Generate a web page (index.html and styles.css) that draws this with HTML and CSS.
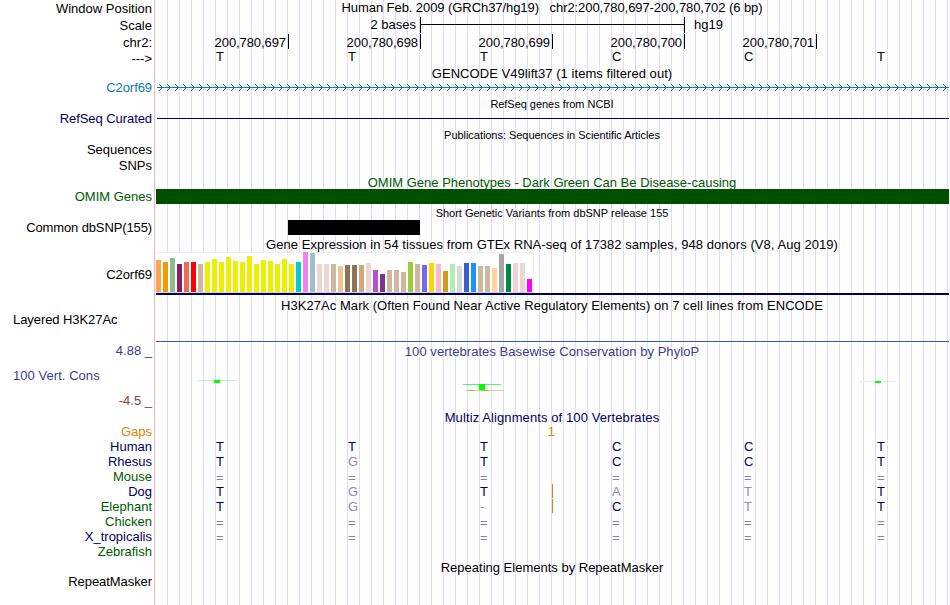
FILE: index.html
```
<!DOCTYPE html>
<html lang="en">
<head>
<meta charset="utf-8">
<title>chr2:200,780,697-200,780,702 Genome Browser</title>
<link rel="stylesheet" href="styles.css">
</head>
<body>
<main class="browser">
  <div class="row position"><div class="label low">Window Position</div><div class="track title t-pos">Human Feb. 2009 (GRCh37/hg19) &nbsp; chr2:200,780,697-200,780,702 (6 bp)</div></div>
  <div class="row scale"><div class="label low">Scale</div><div class="track scalebar"><span class="size">2 bases</span><span class="bar"></span><span class="db">hg19</span></div></div>
  <div class="row ruler"><div class="label">chr2:</div><div class="track ticks"><span>200,780,697</span><span>200,780,698</span><span>200,780,699</span><span>200,780,700</span><span>200,780,701</span></div></div>
  <div class="row"><div class="label arrow">---&gt;</div><div class="track bases black"><span>T</span><span>T</span><span>T</span><span>C</span><span>C</span><span>T</span></div></div>

  <div class="row gap2"><div class="track title t-wide">GENCODE V49lift37 (1 items filtered out)</div></div>
  <div class="row up1"><div class="label blue t-tight">C2orf69</div><div class="track">
    <svg class="gene" width="793" height="15" shape-rendering="crispEdges">
      <defs><pattern id="chev" x="3" y="0" width="8" height="15" patternUnits="userSpaceOnUse"><path d="M0 4h1v1h-1zM1 5h1v1h-1zM2 6h1v1h-1zM3 7h1v1h-1zM2 8h1v1h-1zM1 9h1v1h-1zM0 10h1v1h-1z" fill="#0c78b4"/></pattern></defs>
      <rect x="1" y="7" width="792" height="1" fill="#0c78b4"/><rect x="3" width="790" height="15" fill="url(#chev)"/>
    </svg></div></div>

  <div class="row gap1"><div class="track title small">RefSeq genes from NCBI</div></div>
  <div class="row"><div class="label navy t-tight">RefSeq Curated</div><div class="track"><div class="curated"></div></div></div>

  <div class="row gap1"><div class="track title small">Publications: Sequences in Scientific Articles</div></div>
  <div class="row"><div class="label">Sequences</div></div>
  <div class="row gap1"><div class="label">SNPs</div></div>

  <div class="row gap2"><div class="track title green">OMIM Gene Phenotypes - Dark Green Can Be Disease-causing</div></div>
  <div class="row up1"><div class="label green">OMIM Genes</div><div class="track omim"></div></div>

  <div class="row gap1"><div class="track title small t-short">Short Genetic Variants from dbSNP release 155</div></div>
  <div class="row"><div class="label t-common">Common dbSNP(155)</div><div class="track"><div class="snp"></div></div></div>

  <div class="row gap2"><div class="track title t-wide">Gene Expression in 54 tissues from GTEx RNA-seq of 17382 samples, 948 donors (V8, Aug 2019)</div></div>
  <div class="row expression"><div class="label t-tight">C2orf69</div><div class="track"><div class="gtex" id="gtex"></div></div></div>

  <div class="row gap3"><div class="track title t-wide">H3K27Ac Mark (Often Found Near Active Regulatory Elements) on 7 cell lines from ENCODE</div></div>
  <div class="row layered"><div class="label left t-tight">Layered H3K27Ac</div><div class="track"></div></div>

  <div class="row phylo">
    <div class="label phylolabels"><span class="slate">4.88 _</span><span class="slate left t-wide">100 Vert. Cons</span><span class="brick">-4.5 _</span></div>
    <div class="track phylotrack"><div class="title slate t-wide">100 vertebrates Basewise Conservation by PhyloP</div>
      <svg class="wiggle" width="793" height="34" shape-rendering="crispEdges">
        <rect x="42" y="21" width="38" height="1" fill="#b4ffb4"/><rect x="58" y="21" width="6" height="3" fill="#0f0"/>
        <rect x="307" y="25" width="38" height="1" fill="#50ff50"/><rect x="323" y="25" width="6" height="6" fill="#0f0"/>
        <rect x="310" y="31" width="38" height="1" fill="#d8d490"/><rect x="312" y="31" width="6" height="1" fill="#b4b43c"/><rect x="325" y="31" width="8" height="1" fill="#b4b43c"/>
        <rect x="703" y="22" width="38" height="1" fill="#d0ffd0"/><rect x="719" y="22" width="6" height="2" fill="#0f0"/>
      </svg></div>
  </div>

  <div class="row"><div class="track title navy t-multiz">Multiz Alignments of 100 Vertebrates</div></div>
  <div class="row up1"><div class="label orange">Gaps</div><div class="track bases orange"><span></span><span></span><span class="gapcount">1</span></div></div>
  <div class="row"><div class="label navy">Human</div><div class="track bases"><span>T</span><span>T</span><span>T</span><span>C</span><span>C</span><span>T</span></div></div>
  <div class="row"><div class="label navy">Rhesus</div><div class="track bases"><span>T</span><span class="dim">G</span><span>T</span><span>C</span><span>C</span><span>T</span></div></div>
  <div class="row"><div class="label green">Mouse</div><div class="track bases eq"><span>=</span><span>=</span><span>=</span><span>=</span><span>=</span><span>=</span></div></div>
  <div class="row"><div class="label navy">Dog</div><div class="track bases"><span>T</span><span class="dim">G</span><span class="insert">T</span><span class="dim">A</span><span class="dim">T</span><span>T</span></div></div>
  <div class="row"><div class="label green">Elephant</div><div class="track bases"><span>T</span><span class="dim">G</span><span class="dim insert">-</span><span>C</span><span class="dim">T</span><span>T</span></div></div>
  <div class="row"><div class="label green">Chicken</div><div class="track bases eq"><span>=</span><span>=</span><span>=</span><span>=</span><span>=</span><span>=</span></div></div>
  <div class="row"><div class="label navy">X_tropicalis</div><div class="track bases eq"><span>=</span><span>=</span><span>=</span><span>=</span><span>=</span><span>=</span></div></div>
  <div class="row"><div class="label green">Zebrafish</div></div>

  <div class="row gap1"><div class="track title">Repeating Elements by RepeatMasker</div></div>
  <div class="row up1"><div class="label t-tight">RepeatMasker</div></div>
</main>
<script src="script.js"></script>
</body>
</html>
```
FILE: styles.css
```
* { box-sizing: border-box; }
body { margin: 0; background: #fff; color: #000; font: 13px/15px "Liberation Sans", Arial, sans-serif; overflow: hidden; }
.browser {
  width: 949px; height: 605px; overflow: hidden;
  background:
    linear-gradient(#ffb4b4, #ffb4b4) 154px 0 / 1px 100% no-repeat,
    repeating-linear-gradient(to right, transparent 0 11px, #dcdcff 11px 12px) 156px 0 / 793px 100% no-repeat;
}
.row { display: flex; height: 15px; white-space: nowrap; }
.label { flex: none; width: 156px; padding-right: 4px; text-align: right; }
.label.low { padding-top: 1px; }
.label.arrow { padding-top: 2px; }
.left { text-align: left; padding-left: 13px; }
.track { flex: none; width: 793px; margin-left: auto; }
.title { text-align: center; display: flex; justify-content: center; padding-right: 1px; }
.small { font-size: 11px; padding-top: 1px; letter-spacing: -0.04px; }
.gap1 { margin-top: 1px; }
.gap2 { margin-top: 2px; }
.gap3 { margin-top: 3px; }
.up1 { margin-top: -1px; }

/* tracking per caption */
.t-pos { letter-spacing: -0.07px; }
.t-wide { letter-spacing: 0.05px; }
.t-multiz { letter-spacing: 0.1px; }
.t-tight { letter-spacing: -0.07px; }
.t-short { letter-spacing: -0.01px; }
.t-common { letter-spacing: -0.12px; }

.black { color: #000; }
.blue { color: #0c78b4; }
.navy { color: #000064; }
.green { color: #005a00; }
.slate { color: #3c3c8c; }
.brick { color: #8c3c3c; }
.orange { color: #e68200; }

.scale { margin-top: 2px; }
.scalebar { display: flex; }
.scalebar .size { width: 264px; padding-right: 4px; text-align: right; }
.scalebar .bar { width: 265px; height: 16px; border: solid #000; border-width: 0 1px; background: linear-gradient(#000, #000) 0 7px / 100% 1px no-repeat; }
.scalebar .db { padding-left: 9px; }

.ruler { margin-top: 2px; }
.ruler .label { padding-top: 1px; }
.ticks { display: grid; grid-template-columns: 133px repeat(4, 132px); letter-spacing: -0.08px; }
.ticks span { height: 15px; padding: 1px 2px 0 0; border-right: 1px solid #000; text-align: right; }

.bases { display: grid; grid-template-columns: repeat(6, 132px); color: #000064; }
.bases.black { color: #000; }
.bases.orange { color: #e68200; }
.bases span { padding-left: 60px; }
.bases span:nth-child(6) { padding-left: 61px; }
.bases .dim { color: #8c8cb4; }
.bases.eq { color: #8080b4; padding-top: 1px; }
.bases .gapcount { padding: 0; margin-right: -3px; text-align: right; }
.bases .insert { margin-right: -1px; background: linear-gradient(#e68200, #e68200) 100% 0 / 1px 14px no-repeat; }

.gene, .wiggle { display: block; }
.curated { height: 1px; margin: 7px 0 0 1px; background: #000064; }
.omim { background: #005000; }
.snp { width: 132px; height: 15px; margin-left: 132px; background: #000; }

.expression { height: 43px; }
.expression .label { padding-top: 15px; }
.expression .track { border-bottom: 2px solid #000064; }
.gtex { display: flex; align-items: flex-end; gap: 2px; width: 378px; height: 41px; background: #fff; border: solid #f0f0f0; border-width: 1px 1px 1px 0; border-bottom-color: #d8d8d8; }
.gtex i { flex: none; width: 5px; }

.layered { height: 30px; margin-top: -1px; }
.layered .track { border-bottom: 1px solid #2c5cb4; }
.phylo { height: 67px; margin-top: 1px; }
.phylolabels { display: flex; flex-direction: column; gap: 10px; }
.phylotrack { padding-top: 1px; }
```
FILE: script.js
```
// Median expression per tissue: [bar height, colour]
const tissues = [
  [32, '#ffa54f'], [30, '#ee9a00'], [34, '#8fbc8f'], [28, '#8b1c62'], [30, '#ee6a50'], [30, '#ff0000'], [28, '#cdb79e'],
  ...[30, 33, 30, 35, 31, 30, 36, 28, 32, 31, 28, 33, 28].map(h => [h, '#eeee00']),
  [30, '#00cdcd'], [40, '#ee82ee'], [39, '#9ac0cd'], [28, '#eed5d2'], [28, '#eed5d2'], [28, '#cdb79e'], [26, '#eec591'],
  [27, '#8b7355'], [27, '#8b7355'], [27, '#cdaa7d'], [29, '#eed5d2'], [22, '#b452cd'], [18, '#7a378b'],
  [22, '#cdb79e'], [22, '#cdb79e'], [20, '#cdb79e'], [30, '#9acd32'], [28, '#cdb79e'], [27, '#7a67ee'], [29, '#ffd700'],
  [28, '#ffb6c1'], [21, '#cd9b1d'], [28, '#b4eeb4'], [26, '#d9d9d9'], [29, '#3a5fcd'], [29, '#1e90ff'],
  [26, '#cdb79e'], [26, '#cdb79e'], [24, '#ffd39b'], [38, '#a6a6a6'], [28, '#008b45'], [29, '#eed5d2'], [29, '#eed5d2'], [13, '#ff00ff']
];
const chart = document.getElementById('gtex');
for (const [height, color] of tissues) {
  const bar = document.createElement('i');
  bar.style.height = height + 'px';
  bar.style.background = color;
  chart.appendChild(bar);
}
```
